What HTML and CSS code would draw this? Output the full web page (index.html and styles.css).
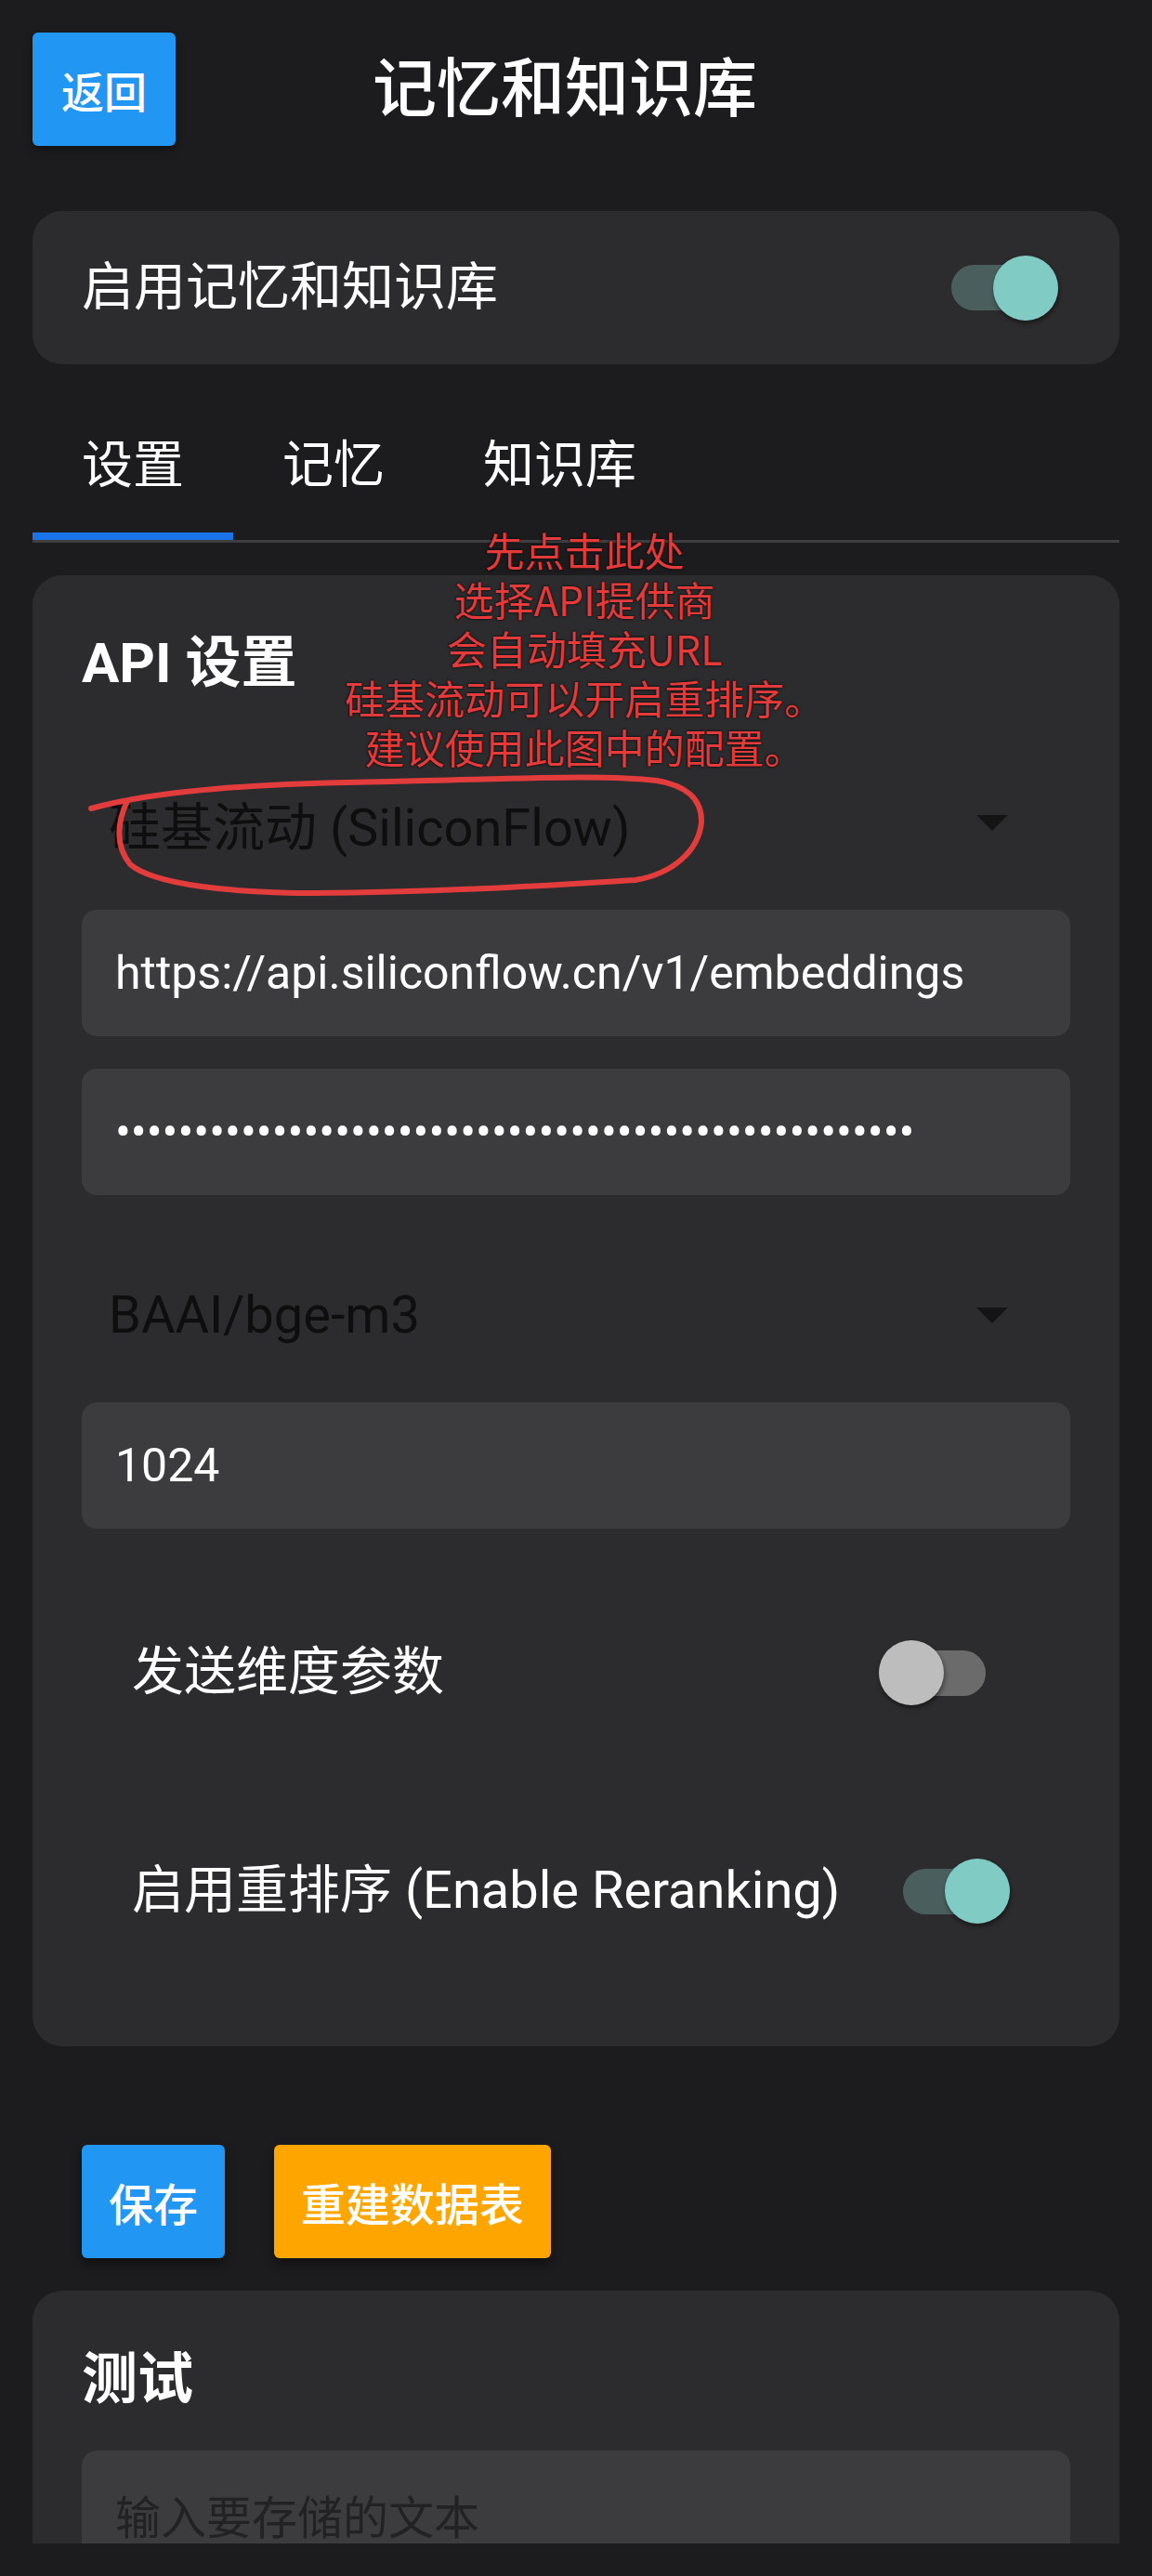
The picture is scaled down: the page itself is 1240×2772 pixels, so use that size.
FILE: index.html
```html
<!DOCTYPE html>
<html lang="zh-CN">
<head>
<meta charset="utf-8">
<title>记忆和知识库</title>
<link rel="stylesheet" href="styles.css">
</head>
<body>
<div class="screen">
  <header class="header">
    <div class="back-btn">返回</div>
    <h1 class="title">记忆和知识库</h1>
  </header>

  <section class="master-card">
    <span class="label">启用记忆和知识库</span>
    <span class="switch on"><span class="thumb"></span></span>
  </section>

  <nav class="tabs">
    <div class="tab active">设置</div>
    <div class="tab">记忆</div>
    <div class="tab">知识库</div>
  </nav>

  <section class="card">
    <h2 class="card-title">API 设置</h2>
    <div class="select first">
      <span>硅基流动 (SiliconFlow)</span>
      <svg class="arrow" width="34" height="17" viewBox="0 0 34 17"><polygon points="0,0 34,0 17,17" fill="#141414"/></svg>
    </div>
    <div class="input">https://api.siliconflow.cn/v1/embeddings</div>
    <div class="input dots">•••••••••••••••••••••••••••••••••••••••••••••••••••</div>
    <div class="select">
      <span>BAAI/bge-m3</span>
      <svg class="arrow" width="34" height="17" viewBox="0 0 34 17"><polygon points="0,0 34,0 17,17" fill="#141414"/></svg>
    </div>
    <div class="input">1024</div>
    <div class="switch-row row-dim">
      <span class="label">发送维度参数</span>
      <span class="switch"><span class="thumb"></span></span>
    </div>
    <div class="switch-row row-rerank">
      <span class="label">启用重排序 (Enable Reranking)</span>
      <span class="switch on"><span class="thumb"></span></span>
    </div>
  </section>

  <div class="actions">
    <div class="btn btn-blue">保存</div>
    <div class="btn btn-orange">重建数据表</div>
  </div>

  <section class="card card-test">
    <h2 class="card-title test-title">测试</h2>
    <div class="input placeholder">输入要存储的文本</div>
  </section>

  <div class="note">
    <div class="note-line">先点击此处</div>
    <div class="note-line">选择API提供商</div>
    <div class="note-line">会自动填充URL</div>
    <div class="note-line">硅基流动可以开启重排序。</div>
    <div class="note-line">建议使用此图中的配置。</div>
  </div>
  <svg class="scribble" width="1240" height="1000" viewBox="0 0 1240 1000">
    <path d="M137,862 C126,885 124,910 140,930 C165,952 250,961 340,961 C480,960 600,952 684,947 C725,940 752,915 755,885 C756,860 738,845 707,840 C650,833 560,838 420,841 C280,843 170,850 98,870" fill="none" stroke="#e23c3c" stroke-width="6" stroke-linecap="round"/>
  </svg>
</div>
</body>
</html>
```

FILE: styles.css
```css
* { box-sizing: border-box; margin: 0; padding: 0; }
html, body { background: #1c1c1e; }
body {
  margin: 0;
  width: 1240px;
  font-family: Roboto, "Noto Sans CJK SC", sans-serif;
  color: #ffffff;
}
.screen {
  position: relative;
  height: 2737px;
  overflow: hidden;
  padding: 35px 35px 0;
}
.header {
  display: flex;
  align-items: center;
  height: 122px;
}
.back-btn {
  width: 154px;
  height: 122px;
  background: #2196f3;
  border-radius: 6px;
  font-size: 46px;
  font-weight: 500;
  display: flex;
  align-items: center;
  justify-content: center;
  box-shadow: 0 4px 10px rgba(0, 0, 0, 0.35);
}
.title {
  margin-left: 212px;
  font-size: 69px;
  font-weight: 500;
  line-height: 1;
}
.master-card {
  margin-top: 70px;
  height: 165px;
  background: #2c2c2e;
  border-radius: 32px;
  display: flex;
  align-items: center;
  justify-content: space-between;
  padding: 0 66px 0 53px;
}
.label {
  font-size: 56px;
  line-height: 1.2;
}
.switch {
  position: relative;
  display: block;
  width: 115px;
  height: 70px;
  flex: none;
}
.switch::before {
  content: "";
  position: absolute;
  left: 0;
  right: 0;
  top: 10.5px;
  height: 49px;
  border-radius: 25px;
  background: #6b6b6b;
}
.switch .thumb {
  position: absolute;
  top: 0;
  left: 0;
  width: 70px;
  height: 70px;
  border-radius: 50%;
  background: #bdbdbd;
  box-shadow: 1px 3px 5px rgba(0, 0, 0, 0.45);
}
.switch.on::before { background: #4a5f5d; }
.switch.on .thumb {
  left: auto;
  right: 0;
  background: #80cbc4;
}
.tabs {
  margin-top: 35px;
  display: flex;
  border-bottom: 3px solid #3e3e40;
}
.tab {
  height: 154px;
  padding: 0 53px;
  font-size: 55px;
  line-height: 146px;
  border-bottom: 8px solid transparent;
}
.tab.active { border-bottom-color: #1a73e8; }
.card {
  margin-top: 35px;
  background: #2c2c2e;
  border-radius: 32px;
  padding: 53px 53px 67px;
}
.card-title {
  font-size: 60px;
  font-weight: 700;
  line-height: 84px;
}
.select {
  margin-top: 70px;
  height: 118px;
  display: flex;
  align-items: center;
  justify-content: space-between;
  padding: 0 67px 0 29px;
  font-size: 56px;
  color: #0e0e0e;
}
.input {
  margin-top: 35px;
  height: 136px;
  background: #3c3c3e;
  border-radius: 16px;
  padding: 0 36px;
  display: flex;
  align-items: center;
  font-size: 50px;
  color: #ffffff;
  white-space: nowrap;
  overflow: hidden;
}
.dots {
  font-size: 50px;
  letter-spacing: 0;
}
.switch-row {
  height: 200px;
  display: flex;
  align-items: center;
  justify-content: space-between;
  padding-left: 54px;
}
.row-dim {
  margin-top: 55px;
  padding-right: 91px;
}
.row-rerank {
  margin-top: 35px;
  padding-right: 65px;
}
.actions {
  margin-top: 106px;
  padding-left: 53px;
  display: flex;
  gap: 53px;
}
.btn {
  height: 122px;
  padding: 0 29px;
  border-radius: 6px;
  font-size: 48px;
  font-weight: 500;
  display: flex;
  align-items: center;
  color: #ffffff;
  box-shadow: 0 6px 12px rgba(0, 0, 0, 0.4);
}
.btn-blue { background: #2196f3; }
.btn-orange { background: #ffa500; }
.card-test { height: 600px; }
.test-title { line-height: 86px; }
.placeholder {
  margin-top: 33px;
  font-size: 49px;
  color: #222224;
}
.note {
  position: absolute;
  left: 329px;
  top: 565px;
  width: 600px;
  text-align: center;
  font-family: "Noto Sans CJK SC", sans-serif;
  font-size: 43px;
  color: #e33b3b;
  text-shadow: 0 0 3px rgba(0, 0, 0, 0.9), 0 0 1px rgba(0, 0, 0, 0.9);
}
.note-line {
  height: 53px;
  line-height: 53px;
}
.scribble {
  position: absolute;
  left: 0;
  top: 0;
  pointer-events: none;
}
```
